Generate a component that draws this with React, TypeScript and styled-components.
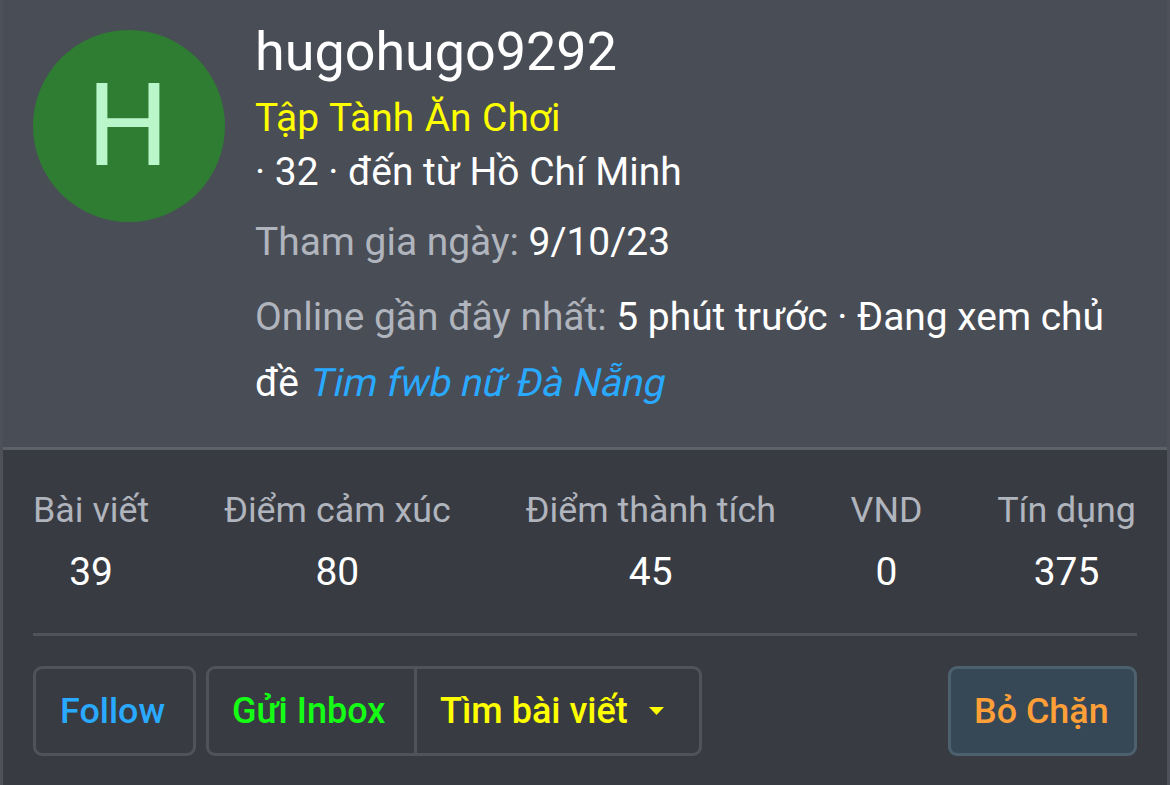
import * as React from 'react'
import styled, { createGlobalStyle } from 'styled-components';

const stats = [
    { label: 'Bài viết', value: '39' },
    { label: 'Điểm cảm xúc', value: '80' },
    { label: 'Điểm thành tích', value: '45' },
    { label: 'VND', value: '0' },
    { label: 'Tín dụng', value: '375' },
]

const App = () => (
    <Card>
        <GlobalStyle />
        <Header>
            <Avatar>H</Avatar>
            <Info>
                <Name>hugohugo9292</Name>
                <Title>Tập Tành Ăn Chơi</Title>
                <Blurb>· 32 · đến từ Hồ Chí Minh</Blurb>
                <Joined><Muted>Tham gia ngày:</Muted> 9/10/23</Joined>
                <Activity>
                    <Muted>Online gần đây nhất:</Muted> 5 phút trước · Đang xem chủ đề <Topic>Tim fwb nữ Đà Nẵng</Topic>
                </Activity>
            </Info>
        </Header>
        <Content>
            <Stats>
                {stats.map(s => (
                    <Stat key={s.label}>
                        <dt>{s.label}</dt>
                        <dd>{s.value}</dd>
                    </Stat>
                ))}
            </Stats>
            <Actions>
                <Button color="#29a9ff" width={163}>Follow</Button>
                <Group>
                    <GroupButton color="#14ff14" width={205}>Gửi Inbox</GroupButton>
                    <GroupButton color="#ffff00" width={285}>
                        Tìm bài viết
                        <Caret viewBox="0 0 15 8"><path d="M0 0h15L7.5 8z" fill="currentColor" /></Caret>
                    </GroupButton>
                </Group>
                <BlockButton color="#ff9f38" width={189}>Bỏ Chặn</BlockButton>
            </Actions>
        </Content>
    </Card>
)

export default App

const GlobalStyle = createGlobalStyle`
    body {
        margin: 0;
        background: #383b42;
        overflow: hidden;
    }
    * {
        box-sizing: border-box;
    }
`

const Card = styled('div')`
    height: 785px;
    border: solid #4e5159;
    border-width: 0 3px;
    background: #383b42;
    color: #fff;
    font-family: Roboto, sans-serif;
    font-size: 38.93px;
`

const Header = styled('header')`
    display: flex;
    height: 450px;
    padding: 30px;
    border-bottom: 3px solid #5d6169;
    background: #494d56;
`

const Avatar = styled('div')`
    flex: none;
    width: 192px;
    height: 192px;
    padding-right: 2px;
    border-radius: 50%;
    background: #2e7d32;
    color: #b9f6ca;
    font-size: 115px;
    line-height: 192px;
    text-align: center;
`

const Info = styled('div')`
    flex: 1;
    margin: -16px 0 0 30px;
    white-space: nowrap;
`

const Name = styled('h1')`
    margin: 0;
    font-size: 53.9px;
    font-weight: 400;
    line-height: 76px;
`

const Title = styled('div')`
    padding-top: 1px;
    color: #ffff00;
    line-height: 54px;
    word-spacing: 0.9px;
`

const Blurb = styled('div')`
    line-height: 54px;
`

const Joined = styled('div')`
    margin-top: 10px;
    line-height: 66px;
`

const Activity = styled('div')`
    margin-top: 9px;
    line-height: 66px;
    white-space: normal;
`

const Muted = styled('span')`
    color: #b0b4bd;
`

// slanted upright face, the real italic is narrower
const Topic = styled('em')`
    display: inline-block;
    margin-left: 2px;
    color: #29a9ff;
    font-style: normal;
    line-height: 46px;
    transform: skewX(-12deg);
`

const Content = styled('main')`
    padding: 30px;
`

const Stats = styled('div')`
    display: flex;
    justify-content: space-between;
    height: 156px;
    padding-right: 1px;
    border-bottom: 3px solid #505359;
`

const Stat = styled('dl')`
    margin: 0;
    text-align: center;
    dt {
        color: #b0b4bd;
        font-size: 35.85px;
        line-height: 60px;
    }
    dd {
        margin: 0;
        line-height: 64px;
    }
`

const Actions = styled('div')`
    display: flex;
    padding-top: 30px;
`

const Button = styled('button')<{ width: number }>`
    display: flex;
    align-items: center;
    width: ${p => p.width}px;
    height: 90px;
    padding: 0 0 0 24px;
    border: 3px solid #505359;
    border-radius: 9px;
    background: transparent;
    color: ${p => p.color};
    font: 500 35.9px Roboto, sans-serif;
    white-space: nowrap;
`

const Group = styled('div')`
    display: flex;
    margin-left: 10px;
    border: 3px solid #505359;
    border-radius: 9px;
`

const GroupButton = styled(Button)`
    height: 84px;
    padding-left: 23px;
    border: 0;
    border-radius: 0;
    font-size: 36px;
    & + & {
        padding-left: 23px;
        border-left: 3px solid #505359;
    }
`

const Caret = styled('svg')`
    width: 15px;
    height: 8px;
    margin-left: 21px;
`

const BlockButton = styled(Button)`
    margin-left: auto;
    padding-left: 23px;
    border-color: #4d606d;
    background: #364855;
`
